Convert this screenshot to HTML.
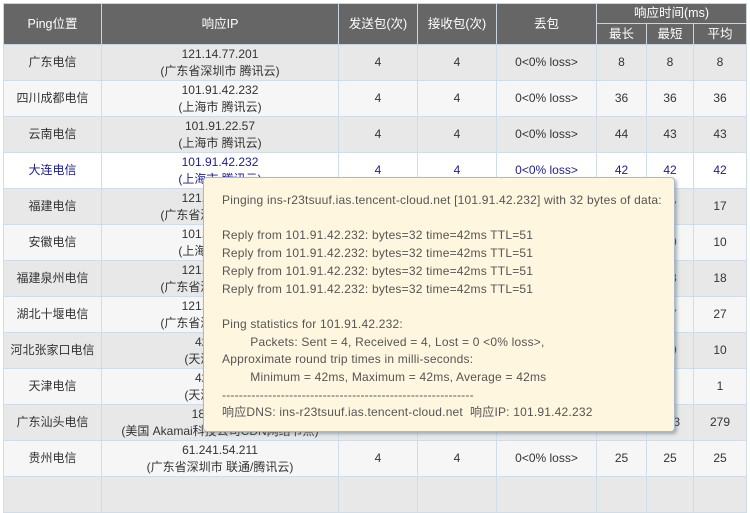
<!DOCTYPE html>
<html><head><meta charset="utf-8"><style>
body{margin:0;width:750px;height:482px;overflow:hidden;background:#fff;font-family:"Liberation Sans","Noto Sans CJK SC",sans-serif;font-size:12px;color:#333;position:relative}
table{position:absolute;left:3px;top:3px;border-collapse:collapse;table-layout:fixed}
td,th{border:1px solid #cfdcea;text-align:center;padding:0;line-height:17px}
th{background:#666;color:#fff;font-weight:normal;border-color:#c8d4e0;font-size:12.5px}
tr.h1 th{height:19px}
tr.h2 th{height:20px}
td{height:35px}
tr.o td{background:#e8e8e8}
tr.e td{background:#f6f6f6}
tr.b td{background:#fff;color:#1c1c8e}
.tip{position:absolute;left:203px;top:177px;width:472px;height:255px;background:#fff6df;border:1px solid #aab9c8;border-radius:4px;box-shadow:2px 2px 3px rgba(90,110,130,.5);color:#555;font-size:12px;letter-spacing:0.2px;line-height:17.7px;box-sizing:border-box;padding:14px 0 0 18px;white-space:pre;font-family:"Liberation Sans","Noto Sans CJK SC",sans-serif}
</style></head><body>
<table>
<colgroup><col style="width:98px"><col style="width:237px"><col style="width:79px"><col style="width:79px"><col style="width:100px"><col style="width:50px"><col style="width:47px"><col style="width:53px"></colgroup>
<tr class="h1"><th rowspan="2">Ping位置</th><th rowspan="2">响应IP</th><th rowspan="2">发送包(次)</th><th rowspan="2">接收包(次)</th><th rowspan="2">丢包</th><th colspan="3">响应时间(ms)</th></tr>
<tr class="h2"><th>最长</th><th>最短</th><th>平均</th></tr>
<tr class="o"><td>广东电信</td><td>121.14.77.201<br>(广东省深圳市 腾讯云)</td><td>4</td><td>4</td><td>0&lt;0% loss&gt;</td><td>8</td><td>8</td><td>8</td></tr>
<tr class="e"><td>四川成都电信</td><td>101.91.42.232<br>(上海市 腾讯云)</td><td>4</td><td>4</td><td>0&lt;0% loss&gt;</td><td>36</td><td>36</td><td>36</td></tr>
<tr class="o"><td>云南电信</td><td>101.91.22.57<br>(上海市 腾讯云)</td><td>4</td><td>4</td><td>0&lt;0% loss&gt;</td><td>44</td><td>43</td><td>43</td></tr>
<tr class="b"><td>大连电信</td><td>101.91.42.232<br>(上海市 腾讯云)</td><td>4</td><td>4</td><td>0&lt;0% loss&gt;</td><td>42</td><td>42</td><td>42</td></tr>
<tr class="o"><td>福建电信</td><td>121.14.77.201<br>(广东省深圳市 腾讯云)</td><td>4</td><td>4</td><td>0&lt;0% loss&gt;</td><td>17</td><td>17</td><td>17</td></tr>
<tr class="e"><td>安徽电信</td><td>101.91.42.232<br>(上海市 腾讯云)</td><td>4</td><td>4</td><td>0&lt;0% loss&gt;</td><td>10</td><td>10</td><td>10</td></tr>
<tr class="o"><td>福建泉州电信</td><td>121.14.77.201<br>(广东省深圳市 腾讯云)</td><td>4</td><td>4</td><td>0&lt;0% loss&gt;</td><td>18</td><td>18</td><td>18</td></tr>
<tr class="e"><td>湖北十堰电信</td><td>121.14.77.201<br>(广东省深圳市 腾讯云)</td><td>4</td><td>4</td><td>0&lt;0% loss&gt;</td><td>27</td><td>27</td><td>27</td></tr>
<tr class="o"><td>河北张家口电信</td><td>42.81.1.1<br>(天津市 电信)</td><td>4</td><td>4</td><td>0&lt;0% loss&gt;</td><td>10</td><td>10</td><td>10</td></tr>
<tr class="e"><td>天津电信</td><td>42.81.1.1<br>(天津市 电信)</td><td>4</td><td>4</td><td>0&lt;0% loss&gt;</td><td>1</td><td>1</td><td>1</td></tr>
<tr class="o"><td>广东汕头电信</td><td>184.25.1.1<br>(美国 Akamai科技公司CDN网络节点)</td><td>4</td><td>4</td><td>0&lt;0% loss&gt;</td><td>283</td><td>273</td><td>279</td></tr>
<tr class="e"><td>贵州电信</td><td>61.241.54.211<br>(广东省深圳市 联通/腾讯云)</td><td>4</td><td>4</td><td>0&lt;0% loss&gt;</td><td>25</td><td>25</td><td>25</td></tr>
<tr class="o"><td>&nbsp;</td><td></td><td></td><td></td><td></td><td></td><td></td><td></td></tr>
</table>
<div class="tip">Pinging ins-r23tsuuf.ias.tencent-cloud.net [101.91.42.232] with 32 bytes of data:

Reply from 101.91.42.232: bytes=32 time=42ms TTL=51
Reply from 101.91.42.232: bytes=32 time=42ms TTL=51
Reply from 101.91.42.232: bytes=32 time=42ms TTL=51
Reply from 101.91.42.232: bytes=32 time=42ms TTL=51

Ping statistics for 101.91.42.232:
        Packets: Sent = 4, Received = 4, Lost = 0 &lt;0% loss&gt;,
Approximate round trip times in milli-seconds:
        Minimum = 42ms, Maximum = 42ms, Average = 42ms
------------------------------------------------------------
响应DNS: ins-r23tsuuf.ias.tencent-cloud.net  响应IP: 101.91.42.232</div>
</body></html>
